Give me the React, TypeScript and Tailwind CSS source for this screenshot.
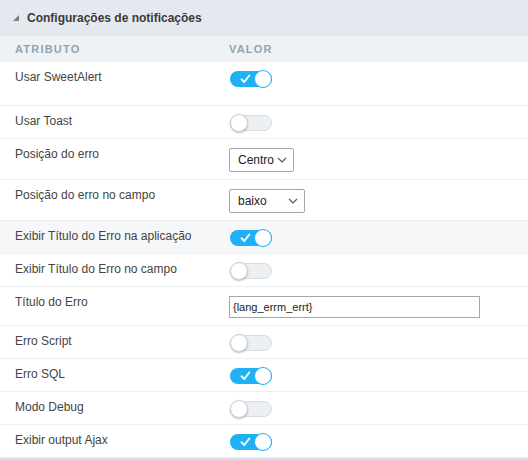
import React from "react";

type Row =
  | { label: string; kind: "toggle"; on: boolean; h: string; shaded?: boolean }
  | { label: string; kind: "select"; value: string; w: string; h: string }
  | { label: string; kind: "input"; value: string; h: string };

const rows: Row[] = [
  { label: "Usar SweetAlert", kind: "toggle", on: true, h: "h-[44px]" },
  { label: "Usar Toast", kind: "toggle", on: false, h: "h-[33px]" },
  { label: "Posição do erro", kind: "select", value: "Centro", w: "w-[65px]", h: "h-[41px]" },
  { label: "Posição do erro no campo", kind: "select", value: "baixo", w: "w-[76px]", h: "h-[41px]" },
  { label: "Exibir Título do Erro na aplicação", kind: "toggle", on: true, h: "h-[33px]", shaded: true },
  { label: "Exibir Título do Erro no campo", kind: "toggle", on: false, h: "h-[33px]" },
  { label: "Título do Erro", kind: "input", value: "{lang_errm_errt}", h: "h-[39px]" },
  { label: "Erro Script", kind: "toggle", on: false, h: "h-[33px]" },
  { label: "Erro SQL", kind: "toggle", on: true, h: "h-[33px]" },
  { label: "Modo Debug", kind: "toggle", on: false, h: "h-[33px]" },
  { label: "Exibir output Ajax", kind: "toggle", on: true, h: "h-[33px]" },
];

function Toggle({ on }: { on: boolean }) {
  if (on) {
    return (
      <div className="relative flex h-[16px] w-[42px] items-center rounded-full bg-[#1fb0f6]">
        <svg className="ml-[10px]" width="11" height="10" viewBox="0 0 11 10">
          <path d="M1.5 5.3 L4.3 8 L9.3 1.5" fill="none" stroke="#fff" strokeWidth="1.9" strokeLinecap="round" strokeLinejoin="round" />
        </svg>
        <div className="absolute right-0 top-[-1px] h-[18px] w-[18px] rounded-full border border-[#1fb0f6] bg-white" />
      </div>
    );
  }
  return (
    <div className="relative h-[16px] w-[42px] rounded-full border border-[#d6dde3] bg-[#edf0f3]">
      <div className="absolute left-[-1px] top-[-2px] h-[18px] w-[18px] rounded-full border border-[#c9cfd4] bg-white shadow-[0_1px_2px_rgba(0,0,0,0.25)]" />
    </div>
  );
}

function Select({ value, w }: { value: string; w: string }) {
  return (
    <div className={`flex h-[24px] items-center justify-between rounded-[2px] border border-[#a6a6a6] bg-white pl-[8px] pr-[6px] text-[12px] text-[#222] ${w}`}>
      <span>{value}</span>
      <svg width="10" height="6" viewBox="0 0 10 6">
        <path d="M1 1 L5 5 L9 1" fill="none" stroke="#555" strokeWidth="1.1" />
      </svg>
    </div>
  );
}

export default function App() {
  return (
    <div className="w-[528px] bg-white font-['Liberation_Sans',Arial,sans-serif] text-[12px] text-[#444]">
      <div className="flex h-[36px] items-center bg-[#e4e9f0] pl-[12px]">
        <svg width="8" height="8" viewBox="0 0 8 8" className="mr-[7px]">
          <path d="M7 1 L7 7 L1 7 Z" fill="#7a7f85" />
        </svg>
        <span className="text-[12px] font-semibold text-[#3a3a3a]">Configurações de notificações</span>
      </div>
      <div className="grid h-[26px] grid-cols-[229px_1fr] items-center bg-[#eff2f5] text-[11px] font-bold tracking-[1.2px] text-[#8ea4b4]">
        <span className="pl-[15px]">ATRIBUTO</span>
        <span>VALOR</span>
      </div>
      {rows.map((row) => (
        <div
          key={row.label}
          className={`grid grid-cols-[229px_1fr] border-b border-[#eceff2] ${row.h} ${
            row.kind === "toggle" && row.shaded ? "bg-[#f6f7f9]" : "bg-white"
          }`}
        >
          <div className="pl-[15px] pt-[7px] leading-[16px]">{row.label}</div>
          <div className="pt-[9px]">
            {row.kind === "toggle" && <div className="pl-[1px]"><Toggle on={row.on} /></div>}
            {row.kind === "select" && <Select value={row.value} w={row.w} />}
            {row.kind === "input" && (
              <div className="flex h-[22px] w-[251px] items-center border border-[#a6a6a6] bg-white pl-[3px] text-[11px] text-[#222]">
                {row.value}
              </div>
            )}
          </div>
        </div>
      ))}
      <div className="h-[2px] bg-[#d5dfe7]" />
    </div>
  );
}
